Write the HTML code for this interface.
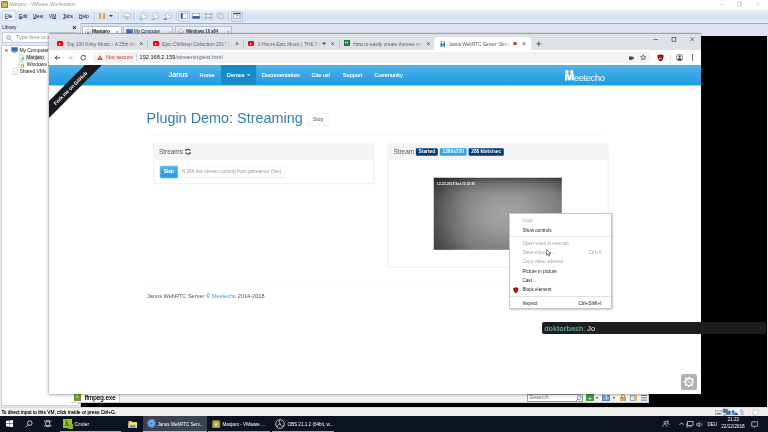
<!DOCTYPE html>
<html lang="en">
<head>
<meta charset="utf-8">
<title>Manjaro - VMware Workstation</title>
<style>
*{box-sizing:border-box;margin:0;padding:0}
html,body{width:768px;height:432px;overflow:hidden;background:#fff}
body{position:relative;font-family:"Liberation Sans",sans-serif;color:#222;-webkit-font-smoothing:antialiased}
#root{position:absolute;left:0;top:0;width:768px;height:432px;overflow:hidden;opacity:.9999}
.abs{position:absolute}
.t{position:absolute;white-space:nowrap;line-height:1}
/* ---------- VMware ---------- */
#vm-title{left:0;top:0;width:768px;height:9.5px;background:#fff}
#vm-tool{left:0;top:9.3px;width:768px;height:14.3px;background:linear-gradient(#f3f7fc 0,#dfe9f8 22%,#d4e1f4 60%,#dde7f6 86%,#e6eefa 100%);border-bottom:.9px solid #a3adc0}
#vm-tabs{left:0;top:23.6px;width:768px;height:12.4px;background:#dfe4f2}
.vm-menu{font-size:5.9px;letter-spacing:-.1px;color:#141428;top:13.8px;transform:scaleX(.82);transform-origin:0 50%}
.vm-menu u{text-decoration-thickness:.3px;text-underline-offset:.4px;text-decoration-color:#556}
.vsep{position:absolute;top:12px;width:.7px;height:9px;background:#c0cbde;box-shadow:.7px 0 0 #f3f7fc}
.vtab{position:absolute;top:26px;height:10px;border:1px solid #b4bfd6;border-bottom:none;border-radius:1px 1px 0 0;background:linear-gradient(#eef2fa,#d9dfef)}
.vtab.on{background:#fff}
.vtab .t{font-size:4.8px;top:2.9px;color:#222;letter-spacing:-.08px}
.vtab .x{position:absolute;top:1.8px;font-size:6px;color:#777;line-height:1}
/* library */
#lib{left:0;top:23px;width:80.5px;height:384px;background:#e4e9f6;border-right:1px solid #c4cde0}
#lib-tree{left:1.400px;top:45px;width:77.800px;height:360.800px;background:#fff;border:1px solid #c9d2e4}
.lt{font-size:5.05px;letter-spacing:-.1px;color:#222}
/* VM screen */
#vmscreen{left:81px;top:36px;width:686px;height:371.5px;background:#000}
/* status + taskbar */
#status{left:0;top:407.3px;width:768px;height:8.7px;background:#f0f0f0;border-top:1px solid #dcdcdc}
#taskbar{left:0;top:416px;width:768px;height:16px;background:#0c131e}
.tb{font-size:4.8px;color:#fff;top:422.7px}
.tul{position:absolute;top:430.6px;height:1.4px;background:#86b4e6}
/* ---------- Chrome ---------- */
#chrome{left:48.6px;top:33.6px;width:652.6px;height:360px;background:#fff;box-shadow:0 -.7px 0 rgba(120,145,180,.8),0 0 2px rgba(0,0,0,.4),0 1px 4px rgba(0,0,0,.22);overflow:hidden}
#ctabs{left:0;top:0;width:100%;height:16.4px;background:#dee1e6}
#ctool{left:0;top:16.4px;width:100%;height:15px;background:#fff}
.ctt{font-size:4.9px;color:#5f6368;top:8px;overflow:hidden;line-height:1.4;-webkit-mask-image:linear-gradient(90deg,#000 85%,transparent)}
.cx{position:absolute;top:7.3px;font-size:6.4px;color:#444;line-height:1}
.csep{position:absolute;top:6.6px;width:.6px;height:7.4px;background:#c2c5cc}
.fav{position:absolute;top:7.8px;width:6.4px;height:4.6px;border-radius:1.2px;background:#f00}
.fav:after{content:"";position:absolute;left:2.5px;top:1.2px;border-left:2px solid #fff;border-top:1.1px solid transparent;border-bottom:1.1px solid transparent}
#omni{left:43.4px;top:18.9px;width:559px;height:10.6px;border-radius:5.3px;background:#f1f3f4}
/* web page (scaled 0.4) */
#web{left:0;top:31.4px;width:1632px;height:822px;transform:scale(.4);transform-origin:0 0;background:#fff;overflow:hidden;font-family:"Liberation Sans",sans-serif;font-size:14px;color:#555}
#nav{left:0;top:0;width:1632px;height:51px;background:linear-gradient(#54b4eb,#2fa4e7 60%,#1d9ce5);border-bottom:1px solid #178acc}
#nav a{position:absolute;top:0;height:50px;line-height:50px;color:#fff;text-shadow:0 0 1px rgba(255,255,255,.75);text-decoration:none;font-size:14px;padding:0 15px;white-space:nowrap}
#nav a.brand{font-size:18px}
#nav a.act{background:#178acc}
.caret{display:inline-block;width:0;height:0;margin-left:2px;vertical-align:middle;border-top:4px solid #fff;border-right:4px solid transparent;border-left:4px solid transparent}
h1{position:absolute;left:244px;top:112.5px;font-size:36px;font-weight:500;color:#317eac;line-height:1.1;white-space:nowrap}
.btn{display:inline-block;font-size:13px;line-height:20px;padding:6px 12px;border:1px solid rgba(0,0,0,.07);border-radius:4px;color:#555;background:linear-gradient(#fff,#fff 60%,#f5f5f5);vertical-align:middle;font-weight:400}
.hr{position:absolute;height:1px;background:#f0f0f0}
.panel{position:absolute;border:1px solid #ddd;border-radius:4px;background:#fff;box-shadow:0 1px 1px rgba(0,0,0,.05)}
.ph{height:41px;background:#f5f5f5;border-bottom:1px solid #ddd;border-radius:3px 3px 0 0;padding:0 13.5px;line-height:41px;font-size:16px;color:#555;white-space:nowrap}
.label{display:inline-block;font-size:12px;font-weight:700;line-height:1;color:#fff;padding:3px 7px 4px;border-radius:3px;vertical-align:1px;background:#033c73}
.label.pri{background:#2fa4e7}
/* context menu */
#cm{left:509.4px;top:213.4px;width:102.6px;height:95.2px;background:#fff;border:.5px solid #c6c6c6;box-shadow:1.2px 1.2px 2.2px rgba(0,0,0,.38)}
#cm .t{font-size:4.65px;color:#1b1b1b;left:12px}
#cm .d{color:#a5a5a5}
#cm .k{left:auto;right:9.4px}
#cm .s{position:absolute;left:0;width:100%;height:.6px;background:#e2e2e2}
/* chat */
#chat{left:541.6px;top:322.3px;width:224.4px;height:11.3px;background:#1e1e1e;border-radius:2px}
</style>
</head>
<body>
<div id="root">

<!-- ================= VMware frame ================= -->
<div class="abs" id="vm-title">
  <svg class="abs" style="left:1px;top:1px" width="7" height="7.4" viewBox="0 0 14 15"><rect x="0" y="0" width="14" height="15" rx="3" fill="#6d8a3c"/><rect x="2" y="2.5" width="10" height="10" rx="2" fill="#e7b93c"/><rect x="4" y="4.5" width="6" height="6" rx="1" fill="#4c9bb5"/><rect x="5.3" y="5.8" width="3.4" height="3.4" fill="#fff"/></svg>
  <span class="t" style="left:9.2px;top:2.3px;font-size:4.85px;color:#9a9a9a;margin-top:1.1px">Manjaro - VMware Workstation</span>
  <svg class="abs" style="left:716px;top:0" width="50" height="9" viewBox="0 0 50 9" fill="none" stroke="#b5b5b5" stroke-width=".5"><path d="M3.6 4.4h4.2"/><rect x="21.6" y="2.8" width="3.2" height="3.2"/><path d="M22.6 2.8v-.9h3.2v3.2h-1"/><path d="M40.2 2.2l3.8 3.8M44 2.2l-3.8 3.8"/></svg>
</div>

<div class="abs" id="vm-tool">
</div>
<div class="abs" style="left:2px;top:10.4px;width:13.6px;height:10.6px;background:#e6effb;border:.5px solid #cfdcf0;border-radius:1px"></div>
<span class="t vm-menu" style="left:5px"><u>F</u>ile</span>
<span class="t vm-menu" style="left:18.6px"><u>E</u>dit</span>
<span class="t vm-menu" style="left:32.6px"><u>V</u>iew</span>
<span class="t vm-menu" style="left:49px">V<u>M</u></span>
<span class="t vm-menu" style="left:63px"><u>T</u>abs</span>
<span class="t vm-menu" style="left:79px"><u>H</u>elp</span>
<i class="vsep" style="left:93.6px"></i>
<!-- pause -->
<div class="abs" style="left:99.2px;top:12.6px;width:2.3px;height:6.8px;background:linear-gradient(90deg,#f3b05c,#e08a2c);border-radius:.4px"></div>
<div class="abs" style="left:102.9px;top:12.6px;width:2.3px;height:6.8px;background:linear-gradient(90deg,#f3b05c,#e08a2c);border-radius:.4px"></div>
<div class="abs" style="left:108.8px;top:15px;border-top:2.3px solid #27367a;border-left:2px solid transparent;border-right:2px solid transparent"></div>
<i class="vsep" style="left:117.8px"></i>
<svg class="abs" style="left:122px;top:11px" width="10" height="10" viewBox="0 0 20 20" fill="none" stroke="#a3a9b7" stroke-width="1.3"><path d="M5 12a3 3 0 0 1 .6-6A4 4 0 0 1 13 5a3.2 3.2 0 0 1 2 6.6H5z" fill="#f2f4f9"/><path d="M10 10v7M7.6 14.6L10 17l2.4-2.4"/></svg>
<i class="vsep" style="left:134.4px"></i>
<svg class="abs" style="left:138.6px;top:11px" width="36" height="10" viewBox="0 0 72 20" fill="#fbfcfe" stroke="#a0a6b4" stroke-width="1.4"><circle cx="10" cy="9" r="6"/><path d="M10 5.4V9h3" fill="none"/><path d="M3.4 14.4v4M1.4 16.4h4" stroke="#7e8698"/><circle cx="34" cy="9" r="6"/><path d="M34 5.4V9h3" fill="none"/><path d="M25.4 16.6h5" stroke="#e08a2c" stroke-width="2.4"/><circle cx="59" cy="9" r="6"/><path d="M59 5.4V9h3" fill="none"/><path d="M49.6 16.4h5.6" stroke="#3a78c2" stroke-width="2.6"/></svg>
<i class="vsep" style="left:175.8px"></i>
<div class="abs" style="left:178.4px;top:10.6px;width:11.6px;height:11.4px;background:#dce8f9;border:.5px solid #b9cbe6;border-radius:1px"></div>
<svg class="abs" style="left:180px;top:12px" width="44" height="9" viewBox="0 0 88 18" fill="none" stroke="#7f93b6" stroke-width="1.1"><rect x="2" y="2.6" width="13.4" height="10.6" fill="#fff"/><rect x="2" y="2.6" width="3.6" height="10.6" fill="#3d5a8c" stroke="none"/><rect x="25" y="3" width="14.6" height="10" fill="#fff"/><rect x="25" y="8.2" width="14.6" height="4.800" fill="#3d5a8c" stroke="none"/><g stroke="#7d8496" stroke-width="1.2"><rect x="52.600" y="5.400" width="8.800" height="6" fill="#fff"/><path d="M50 5.600V3h3M61 3h3v2.600M64 11.200V14h-3M53 14h-3v-2.800"/><g stroke="#8d93a3"><rect x="75" y="2.600" width="8.400" height="7.600" rx="1" fill="#fff"/><rect x="78" y="5.600" width="8.400" height="7.600" rx="1" fill="#fff"/><path d="M79.400 7l5.600 4.800"/></g></g></svg>
<i class="vsep" style="left:228.4px"></i>
<div class="abs" style="left:230.6px;top:10.6px;width:12px;height:11.4px;background:#dce8f9;border:.5px solid #b9cbe6;border-radius:1px"></div>
<svg class="abs" style="left:233.400px;top:12.400px" width="8" height="8" viewBox="0 0 16 16" fill="#fff" stroke="#8a92a6" stroke-width="1.1"><rect x="1.400" y="2" width="13.400" height="11.600"/><rect x="1.400" y="2" width="13.400" height="2.600" fill="#4a4f5c" stroke="none"/><rect x="7" y="7.400" width="6" height="4.400" stroke="#9aa3b8"/></svg>

<div class="abs" id="vm-tabs"></div>
<!-- vm tabs -->
<div class="vtab on" style="left:82px;width:39.8px">
  <svg class="abs" style="left:1.6px;top:1.2px" width="6" height="6.6" viewBox="0 0 12 13" fill="#fff" stroke="#7a8190" stroke-width="1.2"><path d="M1 6l5-4.6L11 6v6H1z"/><rect x="4" y="7" width="4" height="5" fill="#6fae3d" stroke="none"/></svg>
  <span class="t" style="left:9px;font-weight:700;color:#111">Manjaro</span><span class="x" style="left:32.6px">×</span></div>
<div class="vtab" style="left:123px;width:50px">
  <svg class="abs" style="left:1.6px;top:1.6px" width="7" height="6" viewBox="0 0 14 12"><rect x=".7" y=".7" width="12.6" height="8" fill="#3f6db3" stroke="#6f7e9c" stroke-width="1.2"/><rect x="4" y="10" width="6" height="1.6" fill="#8b94a8"/></svg>
  <span class="t" style="left:10px;font-size:4.6px;letter-spacing:-.15px">My Computer</span><span class="x" style="left:44px;color:#9aa3b8">×</span></div>
<div class="vtab" style="left:175px;width:57px">
  <svg class="abs" style="left:1.6px;top:1.2px" width="6" height="6.6" viewBox="0 0 12 13" fill="#fff" stroke="#7a8190" stroke-width="1.2"><path d="M1 6l5-4.6L11 6v6H1z"/><rect x="3.6" y="6.6" width="2" height="5.4" fill="#e59a33" stroke="none"/><rect x="6.6" y="6.6" width="2" height="5.4" fill="#e59a33" stroke="none"/></svg>
  <span class="t" style="left:10px;font-weight:700;color:#333;font-size:4.5px;letter-spacing:-.2px">Windows 10 x64</span><span class="x" style="left:50.4px;color:#9aa3b8">×</span></div>

<!-- library -->
<div class="abs" id="lib">
  <span class="t" style="left:2.2px;top:24.2px;font-size:4.9px;letter-spacing:-.1px;color:#2a2a35;top:2.9px">Library</span>
  <span class="t" style="left:72.2px;top:.6px;font-size:7.4px;font-weight:700;color:#222">×</span>
  <div class="abs" style="left:2px;top:9px;width:76px;height:10.800px;background:#fff;border:.6px solid #c2cce0;border-radius:.6px"></div>
  <svg class="abs" style="left:5.6px;top:11.6px" width="6.4" height="6.4" viewBox="0 0 13 13" fill="none" stroke="#4d7ebf" stroke-width="1.5"><circle cx="5" cy="5" r="3.6"/><path d="M7.8 7.8l4 4"/></svg>
  <span class="t" style="left:16.2px;top:12px;font-size:5.3px;color:#8c8c8c">Type here to search</span>
</div>
<div class="abs" id="lib-tree">
  <div class="abs" style="left:2.2px;top:2.6px;width:3.4px;height:3.4px;border:.5px solid #bcbcbc;background:#fff"></div><div class="abs" style="left:3px;top:4.1px;width:1.8px;height:.5px;background:#888"></div>
  <svg class="abs" style="left:8.3px;top:.9px" width="7" height="6.4" viewBox="0 0 14 13"><rect x=".8" y=".8" width="12.4" height="8" fill="#3f6db3" stroke="#7a869f" stroke-width="1.3"/><rect x="4" y="10.4" width="6" height="1.8" fill="#8b94a8"/></svg>
  <span class="t lt" style="left:17.1px;top:1.7px">My Computer</span>
  <div class="abs" style="left:23.2px;top:8.6px;width:19.4px;height:6px;background:#e6e6e6"></div>
  <svg class="abs" style="left:15.6px;top:8px" width="7" height="7.400" viewBox="0 0 14 15" fill="#fff" stroke="#b4b9c4" stroke-width="1.1"><path d="M2 3.400h2.400V1.400h4v2h2.400v10H2z"/><circle cx="9.400" cy="8.600" r="3.200" fill="#58a83a" stroke="#fff" stroke-width=".8"/><path d="M8.400 6.800l2.600 1.800-2.600 1.800z" fill="#fff" stroke="none"/></svg>
  <span class="t lt" style="left:23.8px;top:9.4px">Manjaro</span>
  <svg class="abs" style="left:15.600px;top:15.200px" width="7" height="7.400" viewBox="0 0 14 15" fill="#fff" stroke="#b4b9c4" stroke-width="1.100"><path d="M2 3.400h2.400V1.400h4v2h2.400v10H2z"/><rect x="6.400" y="6" width="2.400" height="7" fill="#e59a33" stroke="none"/><rect x="10" y="6" width="2.400" height="7" fill="#e59a33" stroke="none"/></svg>
  <span class="t lt" style="left:24.4px;top:16.2px">Windows 10 x64</span>
  <svg class="abs" style="left:9.2px;top:22px" width="6.6" height="7" viewBox="0 0 13 14" fill="#fff" stroke="#c3c7cf" stroke-width="1.1"><path d="M2 1h6l3 3v9H2z"/><path d="M4 6h5M4 8.400h5M4 10.800h5" stroke="#dcdfe5"/></svg>
  <span class="t lt" style="left:17.1px;top:23px">Shared VMs</span>
</div>

<!-- VM screen (black) -->
<div class="abs" id="vmscreen"></div>
<div class="abs" style="left:767px;top:36px;width:1px;height:371px;background:#dfe4f3"></div>

<!-- strip of guest window visible under chrome -->
<div class="abs" style="left:70.6px;top:388px;width:578.6px;height:14.800px;background:linear-gradient(#fafafa 60%,#ececec);border:.5px solid #cfcfcf"></div><div class="abs" style="left:71px;top:393.600px;width:48.400px;height:8.800px;background:#fff"></div>
<div class="abs" style="left:73.8px;top:394.2px;width:7px;height:6.4px;background:#6f9a2a"></div>
<span class="t" style="left:76px;top:395.2px;font-size:4.6px;color:#d8efb0;font-weight:700">λ</span>
<span class="t" style="left:84.700px;top:394.900px;font-size:6.300px;color:#1a1a1a;text-shadow:0 0 .4px #444">ffmpeg.exe</span>
<div class="abs" style="left:119.4px;top:394px;width:.5px;height:8px;background:#d0d0d0"></div>
<div class="abs" style="left:526.6px;top:394.2px;width:56.6px;height:7.4px;background:#fff;border:.5px solid #9aa3ad"></div>
<span class="t" style="left:529px;top:394.3px;font-size:6.2px;font-style:italic;color:#7a7a7a">Search</span>
<svg class="abs" style="left:574.6px;top:394.6px" width="7" height="7" viewBox="0 0 14 14" fill="none" stroke="#666" stroke-width="1.4"><circle cx="8.6" cy="5.4" r="3.8"/><path d="M5.8 8.2l-4.4 4.4"/></svg>
<div class="abs" style="left:586.4px;top:394.4px;width:7.4px;height:7px;background:#2fa53a"></div>
<span class="t" style="left:588.2px;top:394.6px;font-size:6px;font-weight:700;color:#fff">+</span>
<div class="abs" style="left:596.2px;top:397px;border-top:2.2px solid #333;border-left:1.8px solid transparent;border-right:1.8px solid transparent"></div>
<div class="abs" style="left:602.4px;top:394.6px;width:7.8px;height:6.8px;background:#7fa9dc;border:.6px solid #5b86bd"></div>
<span class="t" style="left:605px;top:395.4px;font-size:5px;font-weight:700;color:#dfeaf8">1</span>
<div class="abs" style="left:612.6px;top:397px;border-top:2.2px solid #333;border-left:1.8px solid transparent;border-right:1.8px solid transparent"></div>
<div class="abs" style="left:619.6px;top:396.6px;width:6.4px;height:4.8px;background:#d9a642"></div>
<div class="abs" style="left:620.8px;top:394.4px;width:4px;height:4px;border:.8px solid #c9973a;border-radius:2px 2px 0 0"></div>
<div class="abs" style="left:630px;top:394.6px;width:7.4px;height:6.8px;background:#e8edf3;border:.6px solid #93a4ba"></div>
<div class="abs" style="left:633.6px;top:395.2px;width:3.2px;height:5.6px;background:#c9bb8c"></div>
<div class="abs" style="left:640.6px;top:395px;width:6.8px;height:1.4px;background:#4f88cf;box-shadow:0 2.3px 0 #4f88cf,0 4.6px 0 #4f88cf"></div>

<!-- status bar -->
<div class="abs" id="status">
  <span class="t" style="left:1.4px;top:2.800px;font-size:4.850px;color:#000;text-shadow:0 0 .3px #555">To direct input to this VM, click inside or press Ctrl+G.</span>
  <svg class="abs" style="left:714px;top:.2px" width="48" height="8" viewBox="0 0 96 16"><rect x="3" y="5" width="12" height="8" fill="#dfe3e8" stroke="#7f8896"/><rect x="5" y="10" width="8" height="2" fill="#4a9a4a"/><g transform="translate(-6 0)"><rect x="24" y="2" width="9" height="7" fill="#3f78c4" stroke="#5b6b86"/><rect x="30" y="6" width="9" height="7" fill="#3f78c4" stroke="#5b6b86"/><path d="M27 12l4 3h-8z" fill="#49a04a"/></g><g transform="translate(-12 0)"><path d="M50 3l5 6h-4l5 5-9-1 2-4h-3z" fill="#3d7ecb"/><path d="M56 8l5 6h-9z" fill="#2a5da4"/></g><g transform="translate(-17 0)"><path d="M72 3c3 0 4 3 3 6l2 4-5 1-2-5c-1-3 0-6 2-6z" fill="#c4c8d0" stroke="#a6abb6"/></g><path d="M70 2v12" stroke="#cfcfcf"/><path d="M78 4h11l-1 7-4 3h-6z" fill="#fff" stroke="#9a9a9a"/></svg>
</div>

<!-- taskbar -->
<div class="abs" id="taskbar"></div>
<svg class="abs" style="left:6px;top:420px" width="7.4" height="7.4" viewBox="0 0 16 16" fill="#fff"><path d="M0 2.2l6.6-.9v6.2H0zM7.4 1.2L16 0v7.5H7.4zM0 8.4h6.6v6.2L0 13.7zM7.4 8.4H16V16l-8.600-1.200z"/></svg>
<svg class="abs" style="left:25px;top:419.8px" width="8" height="8" viewBox="0 0 16 16" fill="none" stroke="#fff" stroke-width="1.5"><circle cx="9.6" cy="6.2" r="4.6"/><path d="M6.2 9.600l-5 5"/></svg>
<svg class="abs" style="left:44px;top:420.400px" width="7.600" height="7.200" viewBox="0 0 19 18" fill="none" stroke="#fff" stroke-width="1.700"><rect x="4.600" y="4.600" width="9.800" height="8.800"/><path d="M1.600 1.400v4M1.600 12.600v4M17.400 1.400v4M17.400 12.600v4M4.600 1.600h9.800M4.600 16.400h9.800"/></svg>
<div class="abs" style="left:62.8px;top:419.400px;width:9.400px;height:9px;background:#93c235"></div><div class="abs" style="left:67.600px;top:423.800px;width:5.600px;height:5.600px;background:#86b42e"></div>
<span class="t" style="left:64.800px;top:420.400px;font-size:7px;font-weight:700;color:#3d5a10">λ</span>
<span class="t tb" style="left:74.6px">Cmder</span>
<i class="tul" style="left:60.4px;width:61px"></i>
<svg class="abs" style="left:128px;top:419.600px" width="9.400" height="8.400" viewBox="0 0 19 17"><path d="M1 2h6l1.600 2H18v12H1z" fill="#f6c84a"/><rect x="1" y="6" width="17" height="10" fill="#fbdc7a"/><rect x="4" y="10" width="11" height="6" fill="#4fa3e0"/></svg>
<div class="abs" style="left:142.600px;top:416px;width:64.600px;height:16px;background:#3b4350"></div>
<i class="tul" style="left:142.600px;width:64.600px;background:#9cc4ef"></i>
<svg class="abs" style="left:146.600px;top:419.400px" width="9" height="9" viewBox="0 0 18 18"><circle cx="9" cy="9" r="8.400" fill="#5a8fe8"/><path d="M9 .6A8.400 8.400 0 0 1 16.300 4.800H9z" fill="#6aa0f0"/><circle cx="9" cy="9" r="3.700" fill="#2f6fd8" stroke="#dfe9fb" stroke-width="1.300"/></svg>
<span class="t tb" style="left:157.600px;font-size:4.600px;letter-spacing:-.05px">Janus WebRTC Serv...</span>
<svg class="abs" style="left:212.400px;top:419.600px" width="8.400" height="8.800" viewBox="0 0 14 15"><rect x="0" y="0" width="14" height="15" rx="3" fill="#6d8a3c"/><rect x="2" y="2.500" width="10" height="10" rx="2" fill="#e7b93c"/><rect x="4" y="4.500" width="6" height="6" rx="1" fill="#4c9bb5"/><rect x="5.300" y="5.800" width="3.400" height="3.400" fill="#fff"/></svg>
<span class="t tb" style="left:222.400px;font-size:4.600px">Manjaro - VMware ...</span>
<i class="tul" style="left:208.400px;width:62px"></i>
<svg class="abs" style="left:275.400px;top:419px" width="10" height="10" viewBox="0 0 20 20" fill="none" stroke="#e6e6e6" stroke-width="1.500"><circle cx="10" cy="10" r="8.800" fill="#1c1c1c"/><path d="M10 1.400c-3 3-2 7 .6 8.600M17.800 14c-4 1-7-1.600-7.200-4M3.600 16c1-4 4.400-5.600 7-6"/></svg>
<span class="t tb" style="left:287.400px;font-size:4.600px">OBS 21.1.2 (64bit, w...</span>
<i class="tul" style="left:272.400px;width:62px"></i>
<!-- tray -->
<svg class="abs" style="left:662.4px;top:420px" width="7.6" height="7.6" viewBox="0 0 18 18" fill="none" stroke="#fff" stroke-width="1.400"><circle cx="7" cy="6" r="2.600"/><path d="M2 16c0-4 2-6 5-6s5 2 5 6"/><circle cx="13" cy="3.400" r="1.800"/><path d="M12 8c3-1 5 1 5 4"/></svg>
<svg class="abs" style="left:678.6px;top:422.400px" width="5.200" height="3.400" viewBox="0 0 12 8" fill="none" stroke="#fff" stroke-width="1.600"><path d="M1 7l5-5.400L11 7"/></svg>
<svg class="abs" style="left:686.2px;top:421.100px" width="7.600" height="6.800" viewBox="0 0 18 16" fill="none" stroke="#fff" stroke-width="1.500"><rect x="4" y="1.400" width="12.600" height="9"/><path d="M8 13.600h5M2 5v9h4"/></svg>
<svg class="abs" style="left:696.2px;top:421px" width="7" height="7" viewBox="0 0 16 16" fill="none" stroke="#fff" stroke-width="1.400"><path d="M1.600 6h2.600l3.400-3v10l-3.400-3H1.600z"/><path d="M10 5.400c1.200 1.400 1.200 3.800 0 5.200M12.400 3.400c2.200 2.600 2.200 6.600 0 9.200" stroke="#9aa"/></svg>
<span class="t tb" style="left:707.400px;font-size:4.600px">DEU</span>
<span class="t tb" style="left:727.400px;top:418.200px;font-size:4.700px">21:22</span>
<span class="t tb" style="left:721.200px;top:425.200px;font-size:4.700px">22/12/2018</span>
<svg class="abs" style="left:751px;top:420.600px" width="7.400" height="7.400" viewBox="0 0 17 17" fill="none" stroke="#fff" stroke-width="1.400"><path d="M1.600 2h13.800v10H10l-2.600 3v-3H1.600z"/></svg>

<!-- ================= Chrome window ================= -->
<div class="abs" id="chrome">
  <div class="abs" id="ctabs"></div>
  <!-- tabs (coordinates relative to chrome: x-48.6, y-33.6) -->
  <i class="fav" style="left:8px"></i><span class="t ctt" style="left:18px;width:72px">Top 100 Kirby Music - A 25th An</span><span class="cx" style="left:91px">×</span><i class="csep" style="left:98.800px"></i>
  <i class="fav" style="left:104px"></i><span class="t ctt" style="left:113.600px;width:70px">Epic Chillstep Collection 2017 [2</span><span class="cx" style="left:186.600px">×</span><i class="csep" style="left:194.800px"></i>
  <i class="fav" style="left:199.400px"></i><span class="t ctt" style="left:209px;width:63px">2-Hours Epic Music | THE PO</span>
  <svg class="abs" style="left:273.400px;top:7.400px" width="4.600" height="4.600" viewBox="0 0 10 10" fill="#444"><path d="M1 3.600h2l3-2.600v8l-3-2.600H1z"/><path d="M7.400 3c1 1 1 3 0 4" fill="none" stroke="#444"/></svg>
  <span class="cx" style="left:282.200px">×</span><i class="csep" style="left:290.200px"></i>
  <div class="abs" style="left:295px;top:6.400px;width:6.400px;height:6.400px;background:#1f7a2e"></div><span class="t" style="left:296.400px;top:7.600px;font-size:4px;color:#d5efd5;font-weight:700">H</span>
  <span class="t ctt" style="left:304.600px;width:71px">How to easily create themes wit</span><span class="cx" style="left:378px">×</span>
  <!-- active tab -->
  <div class="abs" style="left:385.4px;top:3.4px;width:97px;height:13.2px;background:#fff;border-radius:3px 3px 0 0"></div>
  <svg class="abs" style="left:391.2px;top:7.100px" width="5.600" height="6" viewBox="0 0 11 12" fill="#2a78c2"><circle cx="2.600" cy="1.700" r="1.600"/><circle cx="8.400" cy="1.700" r="1.600"/><path d="M.8 4h2.800l1.900 3 1.900-3h2.800v8H7.600V8L5.500 11 3.400 8v4H.8z"/></svg>
  <span class="t ctt" style="left:400px;width:62px;color:#55595e;letter-spacing:-.12px">Janus WebRTC Server: Strea</span>
  <div class="abs" style="left:464.9px;top:8.300px;width:3.600px;height:3.600px;border-radius:50%;background:#e8322c"></div>
  <span class="cx" style="left:473.600px">×</span>
  <svg class="abs" style="left:487.800px;top:7.400px" width="5.600" height="5.600" viewBox="0 0 10 10" stroke="#3c4043" stroke-width="1.400"><path d="M5 .6v8.800M.6 5h8.800"/></svg>
  <!-- window controls -->
  <svg class="abs" style="left:600px;top:1.400px" width="50" height="9" viewBox="0 0 50 9" fill="none" stroke="#333" stroke-width=".65"><path d="M4.600 4.600h4.200"/><rect x="23" y="2.400" width="3.800" height="3.800"/><path d="M41.400 2.400l3.800 3.800M45.200 2.400l-3.800 3.800"/></svg>

  <div class="abs" id="ctool"></div>
  <svg class="abs" style="left:5.400px;top:20.400px" width="34" height="7.600" viewBox="0 0 68 15" fill="none" stroke="#3f4246" stroke-width="1.9"><path d="M12.600 7.500H2.400M6.800 3L2.400 7.500l4.400 4.500"/><g stroke="#c4c7cb"><path d="M26.400 7.500h10.200M32.200 3l4.400 4.500-4.400 4.500"/></g><path d="M63.400 7.500a4.700 4.700 0 1 1-1.500-3.400" /><path d="M63.800 2v3.600h-3.600" fill="#4a4d51" stroke="none"/></svg>
  <div class="abs" id="omni"></div>
  <svg class="abs" style="left:48px;top:21px" width="6" height="5.600" viewBox="0 0 12 11"><path d="M6 .4l5.800 10.200H.2z" fill="#d93025"/><path d="M5.400 3.800h1.200v3.400H5.400zM5.400 8h1.200v1.200H5.400z" fill="#fff"/></svg>
  <span class="t" style="left:57.4px;top:21.7px;font-size:5.6px;color:#d93025">Not secure</span>
  <div class="abs" style="left:87px;top:20.8px;width:.5px;height:7px;background:#cfd2d6"></div>
  <span class="t" style="left:91px;top:21.7px;font-size:5.6px;color:#202124">192.168.2.159<span style="color:#686d72">/streamingtest.html</span></span>
  <svg class="abs" style="left:580.2px;top:22px" width="5.4" height="4.2" viewBox="0 0 13 10" fill="#3c4043"><rect x="0" y="1" width="9" height="8" rx="1"/><path d="M9 4l4-2.600v7.200L9 6z"/></svg>
  <svg class="abs" style="left:591.8px;top:20.700px" width="6.600" height="6.600" viewBox="0 0 15 15" fill="none" stroke="#3c4043" stroke-width="1.500"><path d="M7.500 1.600l1.800 4 4.200.4-3.200 2.800 1 4.200-3.800-2.300-3.800 2.300 1-4.200L1.500 6l4.200-.4z"/></svg>
  <svg class="abs" style="left:608.400px;top:20.200px" width="7" height="7.800" viewBox="0 0 14 16"><path d="M7 .6c2 1.400 4 1.800 6.400 1.800 0 6-1.400 10.400-6.400 13C2 12.800.6 8.400.6 2.400 3 2.400 5 2 7 .6z" fill="#7a0c10"/><path d="M7 2.400c1.600 1 3 1.400 4.800 1.500-.1 4.600-1.200 7.800-4.800 9.900-3.600-2.100-4.700-5.300-4.800-9.900C4 3.800 5.400 3.400 7 2.400z" fill="#b01920"/><text x="3.200" y="9.600" font-size="5" font-weight="700" fill="#fff" font-family="Liberation Sans, sans-serif">uO</text></svg>
  <div class="abs" style="left:621.2px;top:20.400px;width:.5px;height:7px;background:#e1e3e6"></div>
  <svg class="abs" style="left:627.7px;top:20.400px" width="7.200" height="7.200" viewBox="0 0 16 16"><circle cx="8" cy="8" r="7" fill="none" stroke="#3c4043" stroke-width="1.600"/><circle cx="8" cy="6" r="2.400" fill="#3c4043"/><path d="M3.400 12.400c1-2 2.600-2.800 4.600-2.800s3.600.8 4.600 2.800A6.400 6.400 0 0 1 8 14.600a6.400 6.400 0 0 1-4.600-2.200z" fill="#3c4043"/></svg>
  <div class="abs" style="left:643.400px;top:20.800px;width:1.200px;height:1.200px;border-radius:50%;background:#3c4043;box-shadow:0 2.300px 0 #3c4043,0 4.600px 0 #3c4043"></div>

  <!-- ============ web page ============ -->
  <div class="abs" id="web">
    <div class="abs" id="nav">
      <a class="brand" style="left:284px">Janus</a>
      <a style="left:361.500px">Home</a>
      <a class="act" style="left:429.500px">Demos <b class="caret"></b></a>
      <a style="left:517.500px">Documentation</a>
      <a style="left:641px">Cite us!</a>
      <a style="left:719.500px">Support</a>
      <a style="left:798.500px">Community</a>
      <!-- meetecho logo -->
      <svg class="abs" style="left:1288px;top:11px" width="106" height="30" viewBox="0 0 106 30"><g fill="#fff"><circle cx="7" cy="5.6" r="4.300"/><circle cx="19" cy="5.600" r="4.300"/><path d="M2 10.200h8.400L13 19l2.600-8.800H24V28h-5.600V17.500L15.200 28h-4.400L7.600 17.500V28H2z"/></g><text x="24.600" y="28" font-family="Liberation Sans, sans-serif" font-size="23.400" fill="#fff" letter-spacing="-1">eetecho</text></svg>
    </div>

    <h1>Plugin Demo: Streaming <span class="btn" style="margin-left:2px;position:relative;top:2.5px">Stop</span></h1>
    <div class="hr" style="left:245px;top:174.5px;width:1145px"></div>

    <!-- panel 1 -->
    <div class="panel" style="left:260.5px;top:195px;width:552px;height:102px">
      <div class="ph">Streams <svg width="17" height="17" viewBox="0 0 16 16" style="vertical-align:-3px" fill="none" stroke="#333" stroke-width="2.400"><path d="M13.400 6.400A5.600 5.600 0 0 0 3.200 5"/><path d="M2.600 9.600A5.600 5.600 0 0 0 12.800 11"/><path d="M1.200 1.600v4.400h4.400z" fill="#333" stroke="none"/><path d="M14.800 14.400V10h-4.400z" fill="#333" stroke="none"/></svg></div>
      <div class="abs" style="left:15px;top:56px;height:31px;width:46px;background:linear-gradient(#54b4eb,#2fa4e7 60%,#1d9ce5);border:1px solid #2a96db;border-radius:4px 0 0 4px;color:#fff;font-size:12px;line-height:29px;text-align:center;font-weight:400;text-shadow:0 0 1px #fff">Stop</div>
      <div class="abs" style="left:60px;top:56px;height:31px;width:269px;border:1px solid #e8e8e8;border-radius:0 4px 4px 0;color:#999;font-size:12px;line-height:29px;padding-left:9px;white-space:nowrap;background:linear-gradient(#fff,#fff 60%,#f8f8f8)">H.264 live stream coming from gstreamer (live)</div>
    </div>

    <!-- panel 2 -->
    <div class="panel" style="left:846.5px;top:195px;width:551.5px;height:311px">
      <div class="ph">Stream <span class="label">Started</span> <span class="label pri">1280x720</span> <span class="label">288 kbits/sec</span></div>
      <div class="abs" style="left:114.5px;top:86px;width:320px;height:179.5px;background:linear-gradient(180deg,rgba(0,0,0,.42) 0,rgba(0,0,0,.14) 8%,rgba(0,0,0,0) 22%),linear-gradient(90deg,rgba(0,0,0,.2) 0,rgba(0,0,0,0) 28%),radial-gradient(ellipse 72% 90% at 57% 51%,#a4a4a4 0,#999 25%,#7c7c7c 60%,#585858 86%,#3a3a3a 112%)">
        <span class="t" style="left:8px;top:11px;font-size:7.4px;font-weight:400;color:#f2f2f2;letter-spacing:.6px;text-shadow:0 0 .6px #fff">12-22-2018 Sat 21:22:35</span>
      </div>
    </div>

    <div class="hr" style="left:245px;top:548.5px;width:1145px"></div>
    <span class="t" style="left:245px;top:570.5px;font-size:14px;color:#555">Janus WebRTC Server © <span style="color:#2fa4e7">Meetecho</span> 2014-2018</span>
  </div>

  <!-- GitHub ribbon -->
  <div class="abs" style="left:0;top:31.4px;width:90px;height:90px;overflow:hidden"><div class="abs" style="left:-27.2px;top:16px;width:101px;height:12.4px;background:#1a1a20;transform:rotate(-45deg);text-align:center;font-size:5px;line-height:12.4px;font-weight:700;color:#fff;white-space:nowrap;padding-right:3px">Fork me on GitHub</div></div>

  <!-- gear -->
  <div class="abs" style="left:632.6px;top:340.3px;width:15.8px;height:16px;border-radius:2.6px;background:#b1b1b1"></div>
  <svg class="abs" style="left:634.5px;top:342.3px" width="12" height="12" viewBox="0 0 24 24" fill="none" stroke="#fff"><circle cx="12" cy="12" r="7" stroke-width="2.600"/><circle cx="12" cy="12" r="9.300" stroke-width="2.400" stroke-dasharray="3.650 3.650" stroke-dashoffset="1.800"/><path d="M8.400 8.800l7.200 6.400" stroke-width="1.700"/></svg>
</div>

<!-- context menu -->
<div class="abs" id="cm">
  <span class="t d" style="top:5.1px">Loop</span>
  <span class="t" style="top:14.5px">Show controls</span>
  <i class="s" style="top:21.4px"></i>
  <span class="t d" style="top:27.400px">Open video in new tab</span>
  <span class="t d" style="top:36.9px">Save video as...</span><span class="t d k" style="top:36.9px">Ctrl+S</span>
  <span class="t d" style="top:46.1px">Copy video address</span>
  <span class="t" style="top:55.6px">Picture in picture</span>
  <span class="t" style="top:64.6px">Cast...</span>
  <svg class="abs" style="left:2.900px;top:72.300px" width="5.600" height="6.400" viewBox="0 0 14 16"><path d="M7 .6c2 1.400 4 1.800 6.400 1.800 0 6-1.400 10.400-6.400 13C2 12.800.6 8.400.6 2.400 3 2.400 5 2 7 .6z" fill="#7a0c10"/><path d="M7 2.400c1.600 1 3 1.400 4.800 1.500-.1 4.600-1.200 7.800-4.800 9.900-3.600-2.100-4.700-5.300-4.800-9.900C4 3.800 5.400 3.400 7 2.400z" fill="#b01920"/></svg>
  <span class="t" style="top:73.400px">Block element</span>
  <i class="s" style="top:81.2px"></i>
  <span class="t" style="top:87.7px">Inspect</span><span class="t k" style="top:87.7px">Ctrl+Shift+I</span>
</div>
<!-- cursor -->
<svg class="abs" style="left:546.400px;top:249px" width="5" height="8" viewBox="0 0 10 16"><path d="M.8.800v11.600l2.700-2.600 2 4.800 1.900-.8-2-4.600h3.800z" fill="#fff" stroke="#000" stroke-width="1"/></svg>

<!-- chat overlay -->
<div class="abs" id="chat"><span class="t" style="left:2.600px;top:2.3px;font-size:7.2px;color:#f4f4f4"><b style="color:#5f9ea0">doktorbash</b><span style="color:#5f9ea0">:</span> Jo</span></div>

</div>
</body>
</html>
